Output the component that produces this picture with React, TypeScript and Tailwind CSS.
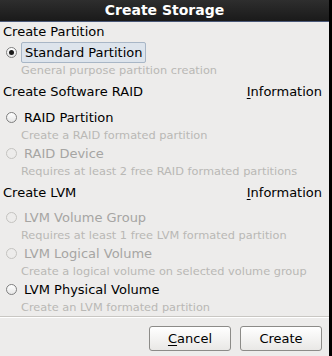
import React from "react";

type Opt = {
  label: string;
  desc: string;
  disabled?: boolean;
  checked?: boolean;
};

function Radio({ checked, disabled }: { checked?: boolean; disabled?: boolean }) {
  return (
    <span
      className={
        "flex h-[11px] w-[11px] shrink-0 items-center justify-center rounded-full border " +
        (disabled
          ? "border-[#c4c3c0] bg-[#edeceb]"
          : "border-[#7f7f7f] bg-gradient-to-b from-[#ffffff] to-[#e6e6e6]")
      }
    >
      {checked && <span className="h-[5px] w-[5px] rounded-full bg-[#1a1a1a]" />}
    </span>
  );
}

function Option({ opt }: { opt: Opt }) {
  return (
    <>
      <div className="flex h-[22px] items-center">
        <div className="flex w-[21px] justify-center pl-[1px]">
          <Radio checked={opt.checked} disabled={opt.disabled} />
        </div>
        <span
          className={
            "flex h-[21px] items-center px-[3px] " +
            (opt.checked
              ? "rounded-[2px] border border-[#a8b6c6] bg-[#dde4ec] text-black"
              : opt.disabled
                ? "text-[#a6a5a3]"
                : "text-black")
          }
        >
          {opt.label}
        </span>
      </div>
      <div className="h-[14px] pl-[21px] text-[11.35px] leading-[14px] text-[#b9b8b5]">
        {opt.desc}
      </div>
    </>
  );
}

function Header({ title, info }: { title: string; info?: boolean }) {
  return (
    <div className="flex h-[17px] items-center justify-between pl-[3px] pr-[7px]">
      <span>{title}</span>
      {info && (
        <span>
          <span className="underline underline-offset-2">I</span>nformation
        </span>
      )}
    </div>
  );
}

export default function App() {
  return (
    <div
      className="flex h-[356px] w-[332px] flex-col border-r-[3px] border-black bg-[#edeceb] text-[13px] leading-[17px] text-black"
      style={{ fontFamily: '"DejaVu Sans", sans-serif' }}
    >
      {/* title bar */}
      <div className="flex h-[22px] shrink-0 items-center justify-center border-b border-[#4a5878] bg-gradient-to-b from-[#2e2e2e] to-[#1a1a1a] text-[14px] font-bold text-white">
        Create Storage
      </div>

      <div className="mt-[1px]">
        <Header title="Create Partition" />
      </div>
      <div className="mt-[1px]">
        <Option
          opt={{
            label: "Standard Partition",
            desc: "General purpose partition creation",
            checked: true,
          }}
        />
      </div>

      <div className="mb-[6px] mt-[6px]">
        <Header title="Create Software RAID" info />
      </div>
      <Option opt={{ label: "RAID Partition", desc: "Create a RAID formated partition" }} />
      <Option
        opt={{
          label: "RAID Device",
          desc: "Requires at least 2 free RAID formated partitions",
          disabled: true,
        }}
      />

      <div className="mb-[5px] mt-[6px]">
        <Header title="Create LVM" info />
      </div>
      <Option
        opt={{
          label: "LVM Volume Group",
          desc: "Requires at least 1 free LVM formated partition",
          disabled: true,
        }}
      />
      <Option
        opt={{
          label: "LVM Logical Volume",
          desc: "Create a logical volume on selected volume group",
          disabled: true,
        }}
      />
      <Option opt={{ label: "LVM Physical Volume", desc: "Create an LVM formated partition" }} />

      <div className="mt-[2px] border-t border-[#c9c7c3] border-b border-b-white" />

      <div className="mt-[8px] flex justify-end gap-[9px] pr-[7px]">
        <button className="flex h-[25px] w-[82px] items-center justify-center rounded-[3px] border border-[#8c8b88] bg-gradient-to-b from-[#ffffff] to-[#e9e8e6]">
          <span className="underline underline-offset-2">C</span>ancel
        </button>
        <button className="flex h-[25px] w-[82px] items-center justify-center rounded-[3px] border border-[#8c8b88] bg-gradient-to-b from-[#ffffff] to-[#e9e8e6]">
          Create
        </button>
      </div>
    </div>
  );
}
